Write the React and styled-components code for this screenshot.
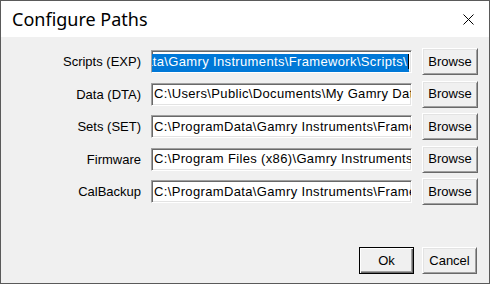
import React from 'react'
import styled, { createGlobalStyle } from 'styled-components'

const Global = createGlobalStyle`
  html, body {
    margin: 0;
    padding: 0;
    background: #ffffff;
  }
`

const Window = styled.div`
  width: 490px;
  height: 284px;
  box-sizing: border-box;
  border: 1px solid #5a5a5a;
  display: flex;
  flex-direction: column;
  background: #f0f0f0;
  overflow: hidden;
`

const TitleBar = styled.div`
  height: 36px;
  flex: none;
  display: flex;
  align-items: center;
  justify-content: space-between;
  background: #ffffff;
  padding: 0 15px 0 11px;
`

const Title = styled.div`
  font-family: "Noto Sans", "Open Sans", sans-serif;
  font-size: 18px;
  color: #000000;
  padding-bottom: 1px;
`

const Close = styled.div`
  width: 11px;
  height: 11px;
  display: flex;
  margin-top: 1px;
`

const Body = styled.div`
  flex: 1;
  display: flex;
  flex-direction: column;
  padding: 11px 12px 9px 0;
  font-family: "Liberation Sans", Arial, sans-serif;
  font-size: 13px;
  color: #000000;
`

const Rows = styled.div`
  display: grid;
  grid-template-columns: 140px 261px 56px;
  grid-auto-rows: 27px;
  column-gap: 10px;
  row-gap: 5.5px;
  align-items: center;
`

const Label = styled.div`
  text-align: right;
  white-space: nowrap;
`

const Field = styled.div`
  height: 23px;
  box-sizing: border-box;
  background: #ffffff;
  border-top: 1px solid #a0a0a0;
  border-left: 1px solid #a0a0a0;
  border-right: 1px solid #ffffff;
  border-bottom: 1px solid #ffffff;
  box-shadow: inset 1px 1px 0 #696969, inset -1px -1px 0 #e3e3e3;
  padding: 2px 2px 0 2px;
  display: flex;
  align-items: center;
  justify-content: ${p => (p.$selected ? 'flex-end' : 'flex-start')};
  overflow: hidden;
  white-space: nowrap;
`

const Value = styled.span`
  flex: none;
  line-height: 16px;
  padding-bottom: 2px;
  letter-spacing: 0.35px;
  background: ${p => (p.$selected ? '#0078d7' : 'transparent')};
  color: ${p => (p.$selected ? '#ffffff' : '#000000')};
`

const Caret = styled.span`
  display: inline-block;
  width: 1px;
  height: 15px;
  background: #000000;
  vertical-align: -3px;
  margin-left: 1px;
`

const Button = styled.button`
  height: 27px;
  width: 100%;
  box-sizing: border-box;
  font-family: "Liberation Sans", Arial, sans-serif;
  font-size: 13px;
  color: #000000;
  background: #f0f0f0;
  padding: 0 0 1px 0;
  border: 1px solid;
  border-color: ${p => (p.$default ? '#000000' : '#ffffff #696969 #696969 #ffffff')};
  box-shadow: ${p =>
    p.$default
      ? 'inset 1px 1px 0 #ffffff, inset -1px -1px 0 #696969, inset -2px -2px 0 #a0a0a0'
      : 'inset 1px 1px 0 #e3e3e3, inset -1px -1px 0 #a0a0a0'};
`

const Footer = styled.div`
  margin-top: auto;
  display: flex;
  justify-content: flex-end;
  gap: 8px;
`

const FooterButton = styled.div`
  width: 55px;
`

const paths = [
  { label: 'Scripts (EXP)', value: 'C:\\ProgramData\\Gamry Instruments\\Framework\\Scripts\\', selected: true },
  { label: 'Data (DTA)', value: 'C:\\Users\\Public\\Documents\\My Gamry Data' },
  { label: 'Sets (SET)', value: 'C:\\ProgramData\\Gamry Instruments\\Framework\\Sets' },
  { label: 'Firmware', value: 'C:\\Program Files (x86)\\Gamry Instruments\\Firmware' },
  { label: 'CalBackup', value: 'C:\\ProgramData\\Gamry Instruments\\Framework\\CalBackup' },
]

export default function App() {
  return (
    <>
      <Global />
      <Window>
        <TitleBar>
          <Title>Configure Paths</Title>
          <Close>
            <svg width="11" height="11" viewBox="0 0 11 11">
              <path d="M0.5 0.5 L10.5 10.5 M10.5 0.5 L0.5 10.5" stroke="#000" strokeWidth="1" fill="none" />
            </svg>
          </Close>
        </TitleBar>
        <Body>
          <Rows>
            {paths.map(p => (
              <React.Fragment key={p.label}>
                <Label>{p.label}</Label>
                <Field $selected={p.selected}>
                  <Value $selected={p.selected}>
                    {p.value}
                    {p.selected && <Caret />}
                  </Value>
                </Field>
                <Button>Browse</Button>
              </React.Fragment>
            ))}
          </Rows>
          <Footer>
            <FooterButton>
              <Button $default>Ok</Button>
            </FooterButton>
            <FooterButton>
              <Button>Cancel</Button>
            </FooterButton>
          </Footer>
        </Body>
      </Window>
    </>
  )
}
